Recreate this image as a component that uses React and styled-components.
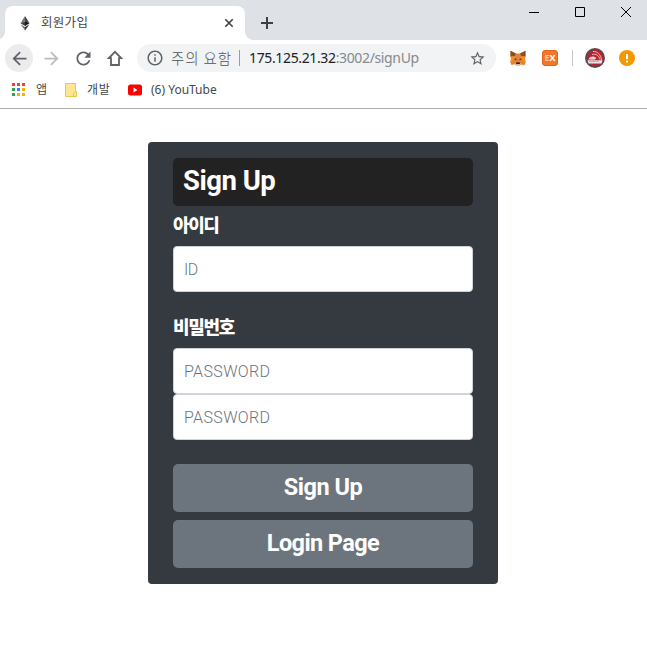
import React from 'react';
import styled, { createGlobalStyle } from 'styled-components';

const Global = createGlobalStyle`
  * { box-sizing: border-box; }
  body { margin: 0; background: #fff; overflow: hidden; font-family: "Noto Sans", "Noto Sans CJK KR", sans-serif; }
  svg { display: block; flex: none; }
`;

const Window = styled.div`
  width: 647px;
  height: 662px;
  background: #fff;
`;

const TitleBar = styled.div`
  display: flex;
  height: 40px;
  padding-left: 5px;
  background: #dee1e6;
`;

const Tab = styled.div`
  position: relative;
  display: flex;
  align-items: center;
  width: 240px;
  height: 34px;
  margin-top: 6px;
  padding: 0 10px 0 12px;
  border-radius: 8px 8px 0 0;
  background: #fff;
  &::before, &::after {
    content: "";
    position: absolute;
    bottom: 0;
    width: 8px;
    height: 8px;
  }
  &::before { left: -8px; background: radial-gradient(circle at 0 0, transparent 7.5px, #fff 8px); }
  &::after { right: -8px; background: radial-gradient(circle at 100% 0, transparent 7.5px, #fff 8px); }
`;

const TabTitle = styled.span`
  flex: 1;
  margin-left: 8px;
  padding-bottom: 2px;
  font: 12.5px/18px "Noto Sans CJK KR", sans-serif;
  letter-spacing: 0.3px;
  color: #45484c;
`;

const NewTab = styled.div`
  display: flex;
  align-items: center;
  margin-left: 14px;
  padding-top: 6px;
`;

const WindowControls = styled.div`
  display: flex;
  gap: 30px;
  margin: 4px 13px 0 auto;
`;

const Toolbar = styled.div`
  display: flex;
  align-items: center;
  gap: 4px;
  height: 36px;
  padding-left: 5px;
`;

const NavButton = styled.div`
  display: flex;
  align-items: center;
  justify-content: center;
  width: 28px;
  height: 28px;
  border-radius: 50%;
  background: ${(p) => (p.$active ? '#ececec' : 'transparent')};
`;

const AddressBar = styled.div`
  display: flex;
  align-items: center;
  width: 359px;
  height: 28px;
  margin-left: 4px;
  padding: 0 10px 0 9px;
  border-radius: 14px;
  background: #f1f3f4;
`;

const Notice = styled.span`
  width: 68px;
  margin-left: 7px;
  font: 300 14.5px/20px "Noto Sans CJK KR", sans-serif;
  letter-spacing: 0.9px;
  white-space: nowrap;
  color: #4d5156;
`;

const Divider = styled.span`
  width: 1px;
  height: 16px;
  background: ${(p) => p.$color};
`;

const Url = styled.span`
  flex: 1;
  margin-left: 9px;
  font: 14px/20px "Noto Sans", sans-serif;
  letter-spacing: -0.36px;
  color: #858a8f;
  white-space: nowrap;
`;

const Host = styled.span`
  color: #202124;
`;

const Extensions = styled.div`
  display: flex;
  align-items: center;
  margin-left: 10px;
`;

const ExtensionIcon = styled.div`
  margin-left: ${(p) => p.$gap}px;
`;

const Bookmarks = styled.div`
  display: flex;
  align-items: center;
  height: 33px;
  padding: 0 0 5px 12px;
  border-bottom: 1px solid #aeaeae;
`;

const Bookmark = styled.div`
  display: flex;
  align-items: center;
  gap: ${(p) => p.$gap}px;
  width: ${(p) => p.$width}px;
  font: 12px/18px "Noto Sans", "Noto Sans CJK KR", sans-serif;
  letter-spacing: ${(p) => p.$spacing || 0}px;
  white-space: nowrap;
  color: #44474b;
`;

const Page = styled.main`
  display: flex;
  justify-content: center;
  padding: 33px 1px 0 0;
`;

const Card = styled.form`
  display: flex;
  flex-direction: column;
  width: 350px;
  height: 442px;
  padding: 16px 25px;
  border-radius: 4px;
  background: #343a40;
`;

const Heading = styled.h1`
  height: 48px;
  margin: 0;
  padding-left: 10px;
  border-radius: 5px;
  background: #222;
  color: #fff;
  font: 700 27.5px/45px Roboto, sans-serif;
  letter-spacing: -0.5px;
`;

const Label = styled.label`
  height: 40px;
  margin-top: ${(p) => p.$top}px;
  color: #fff;
  font: 900 18px/36px "Noto Sans CJK KR", sans-serif;
  letter-spacing: ${(p) => p.$spacing}px;
`;

const Field = styled.input`
  width: 100%;
  height: 46px;
  padding: 0 10px;
  border: 1px solid #ced4da;
  border-radius: 4px;
  outline: 0;
  background: #fff;
  font: 300 16px/24px Roboto, sans-serif;
  letter-spacing: ${(p) => p.$spacing || 0}px;
  &::placeholder { color: #6c757d; opacity: 1; }
`;

const Actions = styled.div`
  display: grid;
  gap: 8px;
  margin-top: 24px;
`;

const Button = styled.button`
  height: 48px;
  padding: 0 0 2px;
  border: 0;
  border-radius: 5px;
  background: #6c757d;
  color: #fff;
  font: 700 23.5px/44px Roboto, sans-serif;
  letter-spacing: ${(p) => p.$spacing}px;
`;

const Material = ({ d, size = 21, color = '#5f6368' }) => (
  <svg width={size} height={size} viewBox="0 0 24 24" fill={color}><path d={d} /></svg>
);

const Ethereum = () => (
  <svg width="16" height="16" viewBox="0 0 16 16">
    <path d="M8 1 3.5 8.3 8 6.3Z" fill="#777" />
    <path d="m8 1 4.5 7.3L8 6.3Z" fill="#444" />
    <path d="M3.5 8.3 8 6.3V11Z" fill="#444" />
    <path d="M12.5 8.3 8 6.3V11Z" fill="#151515" />
    <path d="M3.5 9.3 8 12v3.5Z" fill="#777" />
    <path d="M12.5 9.3 8 12v3.5Z" fill="#333" />
  </svg>
);

const Fox = () => (
  <svg width="16" height="16" viewBox="0 0 16 16">
    <path d="M.5.8 6 3.6h4L15.5.8l.3 5-1 3.2 1 3-1.3 3.2-3.2-.8L9.5 15.5h-3l-1.8-1.3-3.2.8L.2 12l1-3-1-3.2Z" fill="#e8832b" />
    <path d="M.5.8 6 3.6 4.6 6.2.7 6.5ZM15.5.8 10 3.6l1.4 2.6 3.9.3Z" fill="#80512f" />
    <path d="m.8 6.5 4-.3L6 10l-5 1.8Zm14.4 0-4-.3L10 10l5 1.8Z" fill="#f08b2e" />
    <path d="m3.8 9 2.5-.6.2 2ZM12.2 9l-2.5-.6-.2 2Z" fill="#343b48" />
    <path d="m5 13.7 1.5-1.2h3l1.5 1.2-1.6 1.8H6.6Z" fill="#c9bcb0" />
    <path d="M6.3 12.3h3.4l.3 1.7H6Z" fill="#302821" />
  </svg>
);

const ExBadge = styled.div`
  display: flex;
  align-items: center;
  justify-content: center;
  width: 16px;
  height: 16px;
  border: 1px solid #df641e;
  border-radius: 3px;
  background: #f47628;
  color: #fff;
  font: 700 9px/14px "Open Sans", sans-serif;
`;

const Faded = styled.span`
  color: #ffc49c;
`;

const Avatar = () => (
  <svg width="20" height="20" viewBox="0 0 20 20">
    <circle cx="10" cy="10" r="10" fill="#5c4a48" />
    <path d="M3 13C1.5 7 5 2 11 2c5 0 8 5 7 11Z" fill="#c01f2c" />
    <path d="M8 3.5c4-.5 8 3 8.5 8.5M7 6.5c4-1 7 1 8 5" fill="none" stroke="#e9c9cb" strokeWidth=".9" />
    <path d="M3.5 11.5C4 8 9 7.500 11.500 10l-2 1.800Z" fill="#d6d6d8" />
    <path d="M2.500 12.300h15l-1 3.200h-13Z" fill="#eee" />
    <path d="m4 13.8 1.500-1 1 1.400 1.500-1.500 1 1.500 1.500-1.500 1.200 1.500 1.300-1.400 1.500 1.200" fill="none" stroke="#c8505c" strokeWidth=".6" />
    <path d="M5 16h10l-2 1.500H7Z" fill="#b42631" />
  </svg>
);

const dots = ['#ea4335', '#ea4335', '#ea4335', '#34a053', '#2684fc', '#fbac05', '#34a053', '#fbac05', '#fbac05'];

const Apps = () => (
  <svg width="13" height="13" viewBox="0 0 13 13">
    {dots.map((c, i) => <rect key={i} x={(i % 3) * 5} y={Math.floor(i / 3) * 5} width="3" height="3" fill={c} />)}
  </svg>
);

const Folder = () => (
  <svg width="12" height="14" viewBox="0 0 12 14">
    <path d="M.5.5h10v8h1v5H.5Z" fill="#ffe694" stroke="#e8c64f" />
    <path d="M8.5 13.5v-3l2-2" fill="none" stroke="#e8c64f" />
  </svg>
);

const YouTube = () => (
  <svg width="14" height="12" viewBox="0 0 14 12">
    <rect y=".5" width="14" height="11" rx="2.5" fill="#f00" />
    <path d="m5.5 3.5 4 2.5-4 2.5Z" fill="#fff" />
  </svg>
);

export default function App() {
  return (
    <Window>
      <Global />
      <TitleBar>
        <Tab>
          <Ethereum />
          <TabTitle>회원가입</TabTitle>
          <svg width="12" height="12" viewBox="0 0 12 12"><path d="m2.3 2.3 7.4 7.4m0-7.4L2.3 9.7" stroke="#3c4043" strokeWidth="1.6" /></svg>
        </Tab>
        <NewTab>
          <svg width="16" height="14" viewBox="0 0 16 14"><path d="M2 7h12M8 1v12" stroke="#3c4043" strokeWidth="2" /></svg>
        </NewTab>
        <WindowControls>
          <svg width="16" height="16" viewBox="0 0 16 16"><path d="M3 8.5h10" stroke="#000" /></svg>
          <svg width="16" height="16" viewBox="0 0 16 16"><path d="M3.5 3.5h9v9h-9Z" fill="none" stroke="#000" /></svg>
          <svg width="16" height="16" viewBox="0 0 16 16"><path d="m3 3 10 10m0-10L3 13" stroke="#000" /></svg>
        </WindowControls>
      </TitleBar>
      <Toolbar>
        <NavButton $active><Material d="M20 11H7.83l5.59-5.59L12 4l-8 8 8 8 1.41-1.41L7.83 13H20v-2z" /></NavButton>
        <NavButton><Material color="#babcbe" d="m12 4-1.41 1.41L16.17 11H4v2h12.17l-5.58 5.59L12 20l8-8z" /></NavButton>
        <NavButton><Material d="M17.65 6.35C16.2 4.9 14.21 4 12 4c-4.42 0-7.99 3.58-7.99 8s3.57 8 7.99 8c3.73 0 6.84-2.55 7.73-6h-2.08c-.82 2.33-3.04 4-5.65 4-3.31 0-6-2.69-6-6s2.69-6 6-6c1.66 0 3.14.69 4.22 1.78L13 11h7V4l-2.35 2.35z" /></NavButton>
        <NavButton>
          <svg width="18" height="18" viewBox="0 0 18 18"><path d="M2.8 9.200 9 2.800l6.200 6.400H13V16H5V9.200Z" fill="none" stroke="#5f6368" strokeWidth="1.800" /></svg>
        </NavButton>
        <AddressBar>
          <Material size={18} d="M11 7h2v2h-2zm0 4h2v6h-2zm1-9C6.48 2 2 6.48 2 12s4.48 10 10 10 10-4.480 10-10S17.52 2 12 2zm0 18c-4.410 0-8-3.590-8-8s3.590-8 8-8 8 3.590 8 8-3.590 8-8 8z" />
          <Notice>주의 요함</Notice>
          <Divider $color="#9a9da0" />
          <Url><Host>175.125.21.32</Host>:3002/signUp</Url>
          <Material size={17} d="m22 9.24-7.19-.62L12 2 9.19 8.63 2 9.24l5.46 4.73L5.82 21 12 17.27 18.18 21l-1.63-7.03L22 9.24zM12 15.4l-3.76 2.27 1-4.28-3.32-2.88 4.38-.38L12 6.1l1.71 4.04 4.38.38-3.32 2.88 1 4.28L12 15.4z" />
        </AddressBar>
        <Extensions>
          <ExtensionIcon $gap={0}><Fox /></ExtensionIcon>
          <ExtensionIcon $gap={16}><ExBadge><Faded>E</Faded>X</ExBadge></ExtensionIcon>
          <ExtensionIcon $gap={14}><Divider as="div" $color="#c7c9cb" /></ExtensionIcon>
          <ExtensionIcon $gap={12}><Avatar /></ExtensionIcon>
          <ExtensionIcon $gap={14}>
            <svg width="16" height="16" viewBox="0 0 16 16"><circle cx="8" cy="8" r="8" fill="#f29900" /><path d="M8 4v5m0 1.500v2" stroke="#fff" strokeWidth="2" /></svg>
          </ExtensionIcon>
        </Extensions>
      </Toolbar>
      <Bookmarks>
        <Bookmark $gap={11} $width={53}><Apps />앱</Bookmark>
        <Bookmark $gap={10} $width={63} $spacing={0.6}><Folder />개발</Bookmark>
        <Bookmark $gap={9} $width={110}><YouTube />(6) YouTube</Bookmark>
      </Bookmarks>
      <Page>
        <Card>
          <Heading>Sign Up</Heading>
          <Label htmlFor="id" $top={0} $spacing={-1.4}>아이디</Label>
          <Field id="id" placeholder="ID" $spacing={-0.5} />
          <Label htmlFor="password" $top={16} $spacing={-1.3}>비밀번호</Label>
          <Field id="password" type="password" placeholder="PASSWORD" $spacing={0.35} />
          <Field type="password" placeholder="PASSWORD" $spacing={0.35} />
          <Actions>
            <Button type="button" $spacing={-0.45}>Sign Up</Button>
            <Button type="button" $spacing={-0.6}>Login Page</Button>
          </Actions>
        </Card>
      </Page>
    </Window>
  );
}
